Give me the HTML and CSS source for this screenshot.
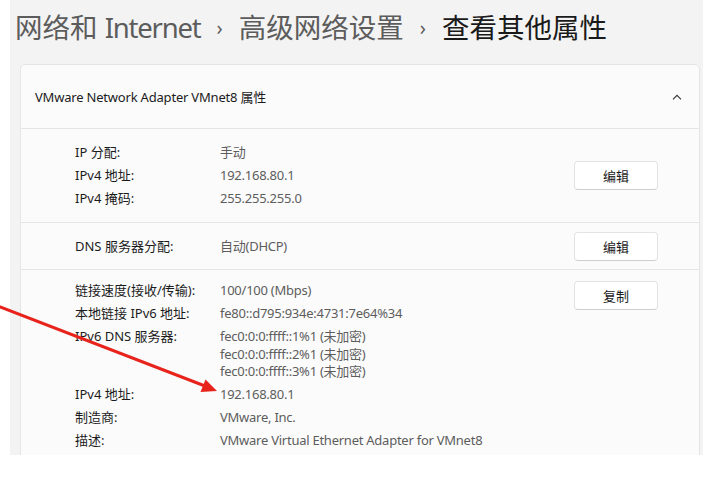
FILE: index.html
```html
<!DOCTYPE html>
<html lang="zh-CN">
<head>
<meta charset="utf-8">
<link rel="stylesheet" href="styles.css">
</head>
<body>
<div class="panel">
  <h1 class="crumbs">
    <span class="crumb">网络和 <span class="latin">Internet</span></span>
    <span class="sep">›</span>
    <span class="crumb">高级网络设置</span>
    <span class="sep">›</span>
    <span class="crumb current">查看其他属性</span>
  </h1>
  <div class="card">
    <div class="card-head">
      <span class="card-title">VMware Network Adapter VMnet8 属性</span>
      <svg class="chev" width="10" height="6" viewBox="0 0 10 6"><path d="M1 5.3 L5 1.3 L9 5.3" fill="none" stroke="#333" stroke-width="1.1"/></svg>
    </div>
    <div class="section sec-center">
      <div class="fields">
        <span class="lbl">IP 分配:</span><span class="val">手动</span>
        <span class="lbl">IPv4 地址:</span><span class="val">192.168.80.1</span>
        <span class="lbl">IPv4 掩码:</span><span class="val">255.255.255.0</span>
      </div>
      <button class="btn">编辑</button>
    </div>
    <div class="section sec-dns">
      <div class="fields">
        <span class="lbl">DNS 服务器分配:</span><span class="val">自动(DHCP)</span>
      </div>
      <button class="btn">编辑</button>
    </div>
    <div class="section sec-top">
      <div class="fields">
        <span class="lbl">链接速度(接收/传输):</span><span class="val">100/100 (Mbps)</span>
        <span class="lbl">本地链接 IPv6 地址:</span><span class="val">fe80::d795:934e:4731:7e64%34</span>
        <span class="lbl">IPv6 DNS 服务器:</span>
        <span class="val multi"><span>fec0:0:0:ffff::1%1 (未加密)</span><span>fec0:0:0:ffff::2%1 (未加密)</span><span>fec0:0:0:ffff::3%1 (未加密)</span></span>
        <span class="lbl">IPv4 地址:</span><span class="val">192.168.80.1</span>
        <span class="lbl">制造商:</span><span class="val">VMware, Inc.</span>
        <span class="lbl">描述:</span><span class="val">VMware Virtual Ethernet Adapter for VMnet8</span>
      </div>
      <button class="btn">复制</button>
    </div>
  </div>
</div>
<svg class="arrow" width="230" height="110" viewBox="0 300 230 110">
  <line x1="-2" y1="306" x2="205" y2="386" stroke="#e8231c" stroke-width="3"/>
  <polygon points="217,391 200.5,392 205.5,379.5" fill="#e8231c"/>
</svg>
</body>
</html>
```

FILE: styles.css
```css
html, body {
  margin: 0;
  padding: 0;
  background: #ffffff;
}
body {
  position: relative;
  font-family: "Noto Sans", "Noto Sans CJK SC", sans-serif;
  color: #1b1b1b;
}
.panel {
  margin-left: 10px;
  width: 693px;
  height: 455px;
  overflow: hidden;
  background: #f3f3f3;
  box-sizing: border-box;
  padding: 0 3px 0 10px;
}
.crumbs {
  margin: 0 0 0 -5px;
  padding-top: 10px;
  height: 64px;
  box-sizing: border-box;
  font-weight: 400;
  font-size: 27.5px;
  line-height: 36px;
  display: flex;
  white-space: nowrap;
}
.crumb {
  color: #5c5c5c;
}
.latin {
  letter-spacing: -1.2px;
}
.crumb.current {
  color: #1a1a1a;
}
.sep {
  color: #5c5c5c;
  font-size: 20px;
  margin: 0 16px;
}
.card {
  background: #fbfbfb;
  border: 1px solid #e5e5e5;
  border-radius: 5px;
  min-height: 400px;
}
.card-head {
  height: 63px;
  display: flex;
  align-items: center;
  justify-content: space-between;
  padding: 0 17px 0 14px;
  border-bottom: 1px solid #e5e5e5;
}
.card-title {
  font-size: 13px;
  letter-spacing: -0.2px;
  color: #1b1b1b;
}
.chev {
  display: block;
}
.section {
  display: flex;
  padding: 0 41px 0 54px;
  border-bottom: 1px solid #e5e5e5;
}
.sec-center {
  align-items: center;
  height: 93px;
}
.sec-dns {
  align-items: center;
  height: 46px;
}
.sec-top {
  align-items: flex-start;
  padding-top: 9px;
  border-bottom: none;
}
.fields {
  display: grid;
  grid-template-columns: 145px auto;
  font-size: 13px;
  line-height: 23px;
}
.lbl {
  color: #1b1b1b;
}
.val {
  color: #5d5d5d;
  white-space: nowrap;
  letter-spacing: -0.25px;
}
.val.multi {
  display: flex;
  flex-direction: column;
  line-height: 17.5px;
  padding: 3px 0 2px;
}
.btn {
  margin-left: auto;
  width: 84px;
  height: 29px;
  background: #ffffff;
  border: 1px solid #e3e3e3;
  border-bottom-color: #cfcfcf;
  border-radius: 4px;
  font-family: "Noto Sans CJK SC", sans-serif;
  font-size: 13px;
  color: #1b1b1b;
  padding: 0;
}
.sec-top .btn {
  margin-top: 2px;
}
.arrow {
  position: absolute;
  left: 0;
  top: 300px;
}
```
